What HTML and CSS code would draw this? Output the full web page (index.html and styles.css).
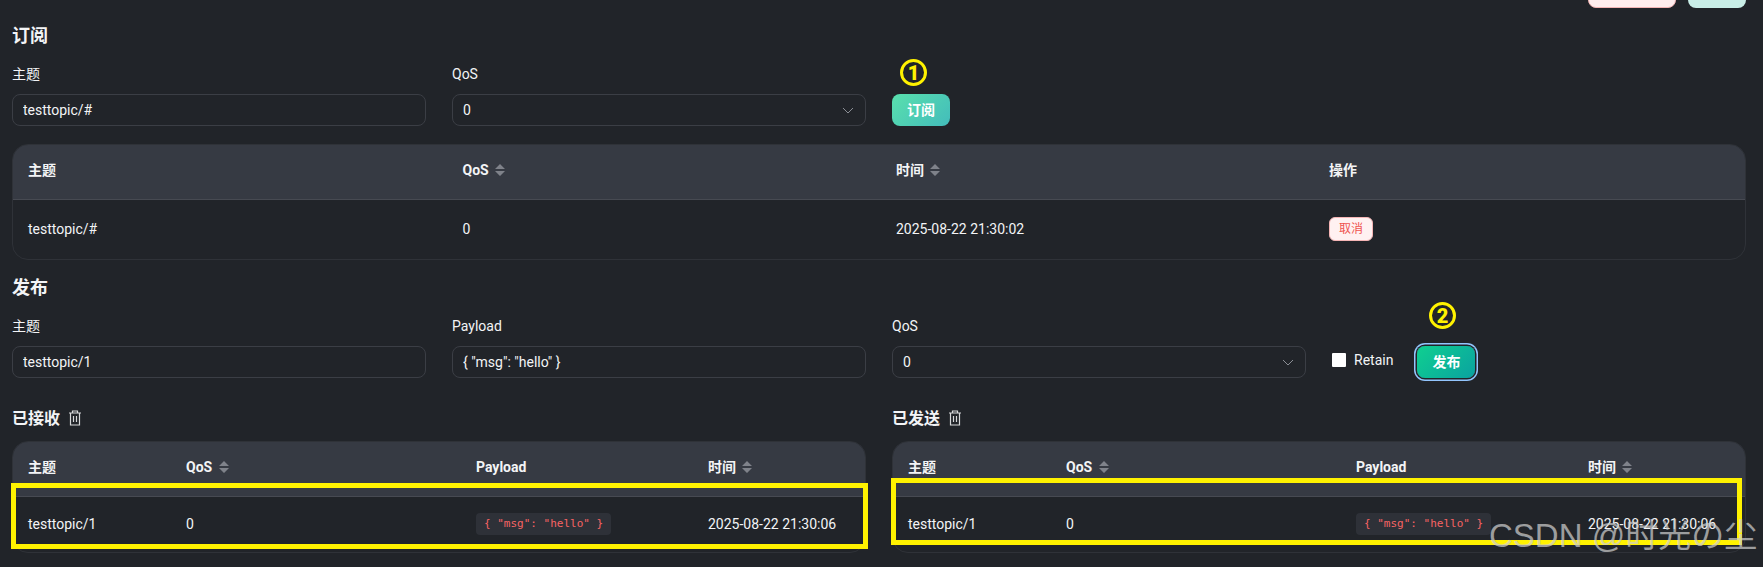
FILE: index.html
```html
<!DOCTYPE html>
<html lang="en">
<head>
    <meta charset="UTF-8">
    <title>MQTT Client</title>
    <link rel="stylesheet" href="styles.css">
</head>
<body>
    <div class="topActions">
        <button class="topButton topDanger"></button>
        <button class="topButton topPrimary"></button>
    </div>

    <h2 class="sectionTitle">订阅</h2>
    <div class="formRow">
        <div class="field">
            <label class="fieldLabel">主题</label>
            <input class="textInput" type="text" value="testtopic/#">
        </div>
        <div class="field">
            <label class="fieldLabel">QoS</label>
            <div class="selectBox">
                <span>0</span>
                <svg class="chevron" viewBox="0 0 12 7"><path d="M1 1l5 5 5-5"/></svg>
            </div>
        </div>
        <button class="primaryButton subscribeButton">订阅</button>
    </div>

    <div class="tableCard">
        <table class="dataTable">
            <colgroup><col class="colFirst"><col class="colSecond"><col class="colThird"><col></colgroup>
            <thead>
                <tr class="tallHead">
                    <th>主题</th>
                    <th>QoS <svg class="sortIcon" viewBox="0 0 10 12"><path d="M5 0l5 5H0zM5 12L0 7h10z"/></svg></th>
                    <th>时间 <svg class="sortIcon" viewBox="0 0 10 12"><path d="M5 0l5 5H0zM5 12L0 7h10z"/></svg></th>
                    <th>操作</th>
                </tr>
            </thead>
            <tbody>
                <tr class="tallRow">
                    <td>testtopic/#</td>
                    <td>0</td>
                    <td>2025-08-22 21:30:02</td>
                    <td><button class="cancelButton">取消</button></td>
                </tr>
            </tbody>
        </table>
    </div>

    <h2 class="sectionTitle">发布</h2>
    <div class="formRow">
        <div class="field">
            <label class="fieldLabel">主题</label>
            <input class="textInput" type="text" value="testtopic/1">
        </div>
        <div class="field">
            <label class="fieldLabel">Payload</label>
            <input class="textInput" type="text" value='{ "msg": "hello" }'>
        </div>
        <div class="field">
            <label class="fieldLabel">QoS</label>
            <div class="selectBox">
                <span>0</span>
                <svg class="chevron" viewBox="0 0 12 7"><path d="M1 1l5 5 5-5"/></svg>
            </div>
        </div>
        <div class="retain">
            <span class="checkBox"></span>
            <span>Retain</span>
        </div>
        <button class="primaryButton publishButton">发布</button>
    </div>

    <div class="messageColumns">
        <div>
            <h3 class="listTitle">已接收
                <svg class="trashIcon" viewBox="0 0 14 16"><path d="M1 3h12M4.500 3V1h5v2M2.500 3v12h9V3M5.500 6v6M8.500 6v6"/></svg>
            </h3>
            <div class="tableCard">
                <table class="dataTable messageTable">
                    <colgroup><col class="colTopic"><col class="colQos"><col class="colPayload"><col class="colTime"></colgroup>
                    <thead>
                        <tr class="tallHead">
                            <th>主题</th>
                            <th>QoS <svg class="sortIcon" viewBox="0 0 10 12"><path d="M5 0l5 5H0zM5 12L0 7h10z"/></svg></th>
                            <th>Payload</th>
                            <th>时间 <svg class="sortIcon" viewBox="0 0 10 12"><path d="M5 0l5 5H0zM5 12L0 7h10z"/></svg></th>
                        </tr>
                    </thead>
                    <tbody>
                        <tr class="shortRow">
                            <td>testtopic/1</td>
                            <td>0</td>
                            <td><code class="payloadChip">{ "msg": "hello" }</code></td>
                            <td>2025-08-22 21:30:06</td>
                        </tr>
                    </tbody>
                </table>
            </div>
        </div>
        <div>
            <h3 class="listTitle">已发送
                <svg class="trashIcon" viewBox="0 0 14 16"><path d="M1 3h12M4.500 3V1h5v2M2.500 3v12h9V3M5.500 6v6M8.500 6v6"/></svg>
            </h3>
            <div class="tableCard">
                <table class="dataTable messageTable">
                    <colgroup><col class="colTopic"><col class="colQos"><col class="colPayload"><col class="colTime"></colgroup>
                    <thead>
                        <tr class="tallHead">
                            <th>主题</th>
                            <th>QoS <svg class="sortIcon" viewBox="0 0 10 12"><path d="M5 0l5 5H0zM5 12L0 7h10z"/></svg></th>
                            <th>Payload</th>
                            <th>时间 <svg class="sortIcon" viewBox="0 0 10 12"><path d="M5 0l5 5H0zM5 12L0 7h10z"/></svg></th>
                        </tr>
                    </thead>
                    <tbody>
                        <tr class="shortRow">
                            <td>testtopic/1</td>
                            <td>0</td>
                            <td><code class="payloadChip">{ "msg": "hello" }</code></td>
                            <td>2025-08-22 21:30:06</td>
                        </tr>
                    </tbody>
                </table>
            </div>
        </div>
    </div>

    <!-- annotations drawn over the screenshot -->
    <span class="stepMark stepOne">1</span>
    <span class="stepMark stepTwo">2</span>
    <div class="highlight highlightLeft"></div>
    <div class="highlight highlightRight"></div>
    <div class="watermark">CSDN @时光の尘</div>
</body>
</html>
```

FILE: styles.css
```css
* {
    box-sizing: border-box;
}

html, body {
    height: 100%;
}

body {
    position: relative;
    margin: 0;
    padding: 0 17px 0 12px;
    overflow: hidden;
    background-color: #212429;
    color: #f3f4f6;
    font-family: 'Roboto', 'Noto Sans CJK SC', sans-serif;
    font-size: 14px;
    line-height: 20px;
}

.topActions {
    display: flex;
    justify-content: flex-end;
    gap: 12px;
    height: 8px;
}

.topButton {
    height: 32px;
    margin-top: -24px;
    border-radius: 8px;
    border: 1px solid transparent;
}

.topDanger {
    width: 88px;
    background: #ffeded;
    border-color: #f3b4b4;
}

.topPrimary {
    width: 58px;
    background: #c9eee7;
}

.sectionTitle {
    margin: 16px 0 16px;
    font-size: 18px;
    line-height: 24px;
    font-weight: 700;
}

.formRow {
    display: flex;
    align-items: flex-end;
    gap: 26px;
}

.field {
    width: 414px;
}

.fieldLabel {
    display: block;
    margin-bottom: 10px;
}

.textInput,
.selectBox {
    display: flex;
    align-items: center;
    justify-content: space-between;
    width: 100%;
    height: 32px;
    padding: 0 11px 0 10px;
    background: transparent;
    border: 1px solid #3b3e45;
    border-radius: 8px;
    color: #f3f4f6;
    font: inherit;
    outline: none;
}

.chevron {
    width: 12px;
    height: 7px;
    fill: none;
    stroke: #8b8e95;
    stroke-width: 1;
}

.primaryButton {
    width: 58px;
    height: 32px;
    padding: 0;
    border: none;
    border-radius: 8px;
    color: #ffffff;
    font: inherit;
    font-weight: 700;
}

.subscribeButton {
    background: linear-gradient(135deg, #59e0ad, #43bcbb);
}

.publishButton {
    margin-left: -2px;
    background: linear-gradient(135deg, #0fcf90, #0aa2a0);
    box-shadow: 0 0 0 1.5px #212429, 0 0 0 3px #93c5fd;
}

.retain {
    display: flex;
    align-items: center;
    gap: 8px;
    height: 32px;
    padding-bottom: 4px;
}

.checkBox {
    width: 14px;
    height: 14px;
    background: #ffffff;
    border-radius: 1px;
}

.tableCard {
    margin-top: 18px;
    border: 1px solid #2f3238;
    border-radius: 16px;
    overflow: hidden;
}

.dataTable {
    width: 100%;
    border-collapse: collapse;
    table-layout: fixed;
}

.dataTable th {
    padding: 0 15px 3px;
    background: #363a43;
    border-bottom: 1px solid #474a52;
    text-align: left;
    font-weight: 700;
}

.dataTable td {
    padding: 0 15px;
}

.tallHead th {
    height: 54px;
}

.tallRow td {
    height: 60px;
}

.shortRow td {
    height: 56px;
}

.colFirst { width: 434.5px; }
.colSecond { width: 433.5px; }
.colThird { width: 433px; }

.colTopic { width: 158px; }
.colQos { width: 290px; }
.colPayload { width: 232px; }
.colTime { width: 174px; }

.sortIcon {
    width: 10px;
    height: 12px;
    margin-left: 3px;
    vertical-align: -1px;
    fill: #7f828a;
}

.cancelButton {
    display: block;
    width: 44px;
    height: 24px;
    padding: 0;
    background: #fff1f1;
    border: 1px solid #f5b5b5;
    border-radius: 6px;
    color: #ef5350;
    font: inherit;
    font-size: 12px;
}

.messageColumns {
    display: grid;
    grid-template-columns: 854px 854px;
    gap: 26px;
    margin-top: 29px;
}

.listTitle {
    display: flex;
    align-items: center;
    gap: 8px;
    margin: 0;
    font-size: 16px;
    line-height: 24px;
    font-weight: 700;
}

.listTitle + .tableCard {
    margin-top: 10px;
}

.trashIcon {
    width: 14px;
    height: 16px;
    margin-top: -2px;
    fill: none;
    stroke: #d7d8da;
    stroke-width: 1.2;
}

.payloadChip {
    display: inline-block;
    height: 22px;
    padding: 0 8px;
    background: #2e3138;
    border-radius: 4px;
    color: #f86464;
    font-family: 'DejaVu Sans Mono', monospace;
    font-size: 11px;
    line-height: 22px;
    vertical-align: middle;
}

.stepMark {
    position: absolute;
    display: flex;
    align-items: center;
    justify-content: center;
    width: 27px;
    height: 27px;
    border: 3px solid #fff200;
    border-radius: 50%;
    color: #fff200;
    font-family: 'Roboto', sans-serif;
    font-size: 20px;
    font-weight: 900;
}

.stepOne {
    left: 900px;
    top: 59px;
}

.stepTwo {
    left: 1429px;
    top: 302px;
}

.highlight {
    position: absolute;
    border: 5px solid #fff200;
}

.highlightLeft {
    left: 11px;
    top: 483px;
    width: 857px;
    height: 66px;
}

.highlightRight {
    left: 891px;
    top: 478px;
    width: 851px;
    height: 67px;
}

.watermark {
    position: absolute;
    left: 1489px;
    top: 514px;
    color: rgba(205, 205, 205, 0.72);
    font-family: 'Liberation Sans', 'Noto Sans CJK SC', sans-serif;
    font-size: 33px;
    line-height: 44px;
    white-space: nowrap;
}
```
